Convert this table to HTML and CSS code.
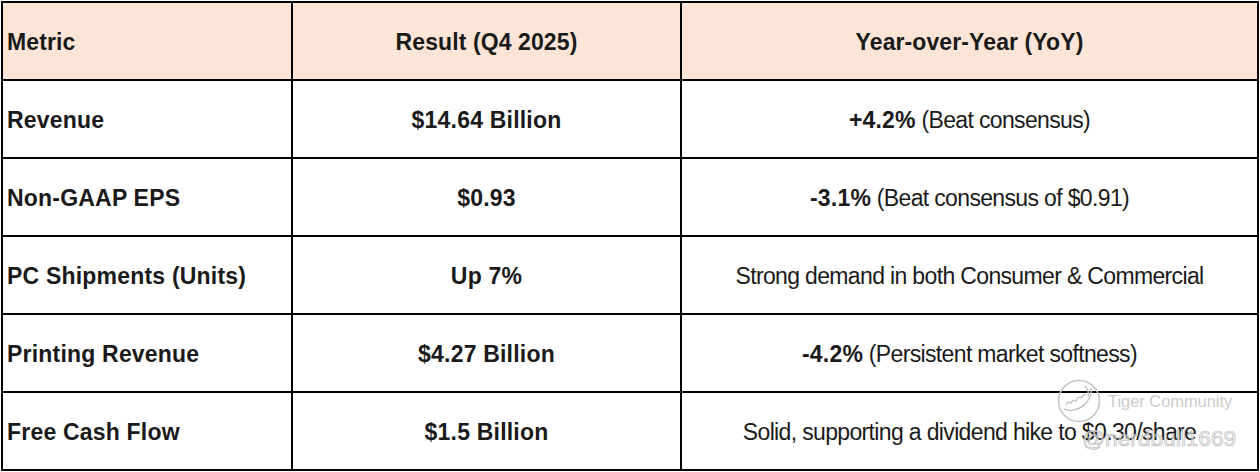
FILE: index.html
```html
<!DOCTYPE html>
<html>
<head>
<meta charset="utf-8">
<link rel="stylesheet" href="styles.css">
</head>
<body>
<div class="page">
  <table class="metrics">
    <colgroup>
      <col class="c1"><col class="c2"><col class="c3">
    </colgroup>
    <thead>
      <tr>
        <th class="left">Metric</th>
        <th>Result (Q4 2025)</th>
        <th>Year-over-Year (YoY)</th>
      </tr>
    </thead>
    <tbody>
      <tr>
        <td class="left b">Revenue</td>
        <td class="b">$14.64 Billion</td>
        <td><b>+4.2%</b> (Beat consensus)</td>
      </tr>
      <tr>
        <td class="left b">Non-GAAP EPS</td>
        <td class="b">$0.93</td>
        <td><b>-3.1%</b> (Beat consensus of $0.91)</td>
      </tr>
      <tr>
        <td class="left b">PC Shipments (Units)</td>
        <td class="b">Up 7%</td>
        <td>Strong demand in both Consumer &amp; Commercial</td>
      </tr>
      <tr>
        <td class="left b">Printing Revenue</td>
        <td class="b">$4.27 Billion</td>
        <td><b>-4.2%</b> (Persistent market softness)</td>
      </tr>
      <tr>
        <td class="left b">Free Cash Flow</td>
        <td class="b">$1.5 Billion</td>
        <td>Solid, supporting a dividend hike to $0.30/share</td>
      </tr>
    </tbody>
  </table>
  <div class="watermark">
    <svg class="wm-logo" width="44" height="44" viewBox="0 0 44 44">
      <circle cx="22" cy="22" r="20.5" fill="none" stroke="#c4c4c4" stroke-width="1.6"/>
      <path d="M7 30 C13 33 22 31 28 25 C33 20 35 14 34 9" fill="none" stroke="#c4c4c4" stroke-width="1.5"/>
      <path d="M9 26 Q11 22 14 24 Q16 20 19 22 Q21 17 24 19 Q26 15 29 16" fill="none" stroke="#c4c4c4" stroke-width="1.4"/>
      <path d="M28 7 C31 10 32 14 31 18" fill="none" stroke="#c4c4c4" stroke-width="1.4"/>
    </svg>
    <span class="wm-name">Tiger Community</span>
    <span class="wm-user">@nerdbull1669</span>
  </div>
</div>
</body>
</html>
```

FILE: styles.css
```css
html, body {
  margin: 0;
  padding: 0;
  background: #ffffff;
}
.page {
  position: relative;
  width: 1260px;
  height: 472px;
  overflow: hidden;
}
.metrics {
  margin: 1px 0 0 1px;
  border-collapse: separate;
  border-spacing: 0;
  table-layout: fixed;
  width: 1258px;
  border-left: 2px solid #000;
  border-top: 2px solid #000;
  font-family: "Liberation Sans", Arial, sans-serif;
  font-size: 23px;
  color: #1a1a1a;
}
.c1 { width: 290px; }
.c2 { width: 389px; }
.c3 { width: 577px; }
.metrics th,
.metrics td {
  height: 76px;
  padding: 2px 4px 0;
  box-sizing: border-box;
  border-right: 2px solid #000;
  border-bottom: 2px solid #000;
  text-align: center;
  vertical-align: middle;
  white-space: nowrap;
  font-weight: normal;
  letter-spacing: -0.65px;
}
.metrics tr { height: 78px; }
.metrics th {
  background: #fce4d6;
  font-weight: bold;
  letter-spacing: 0.1px;
}
.metrics .left {
  text-align: left;
  padding-left: 4px;
}
.metrics .b,
.metrics b {
  font-weight: bold;
  letter-spacing: 0.2px;
}
.watermark {
  position: absolute;
  left: 1057px;
  top: 379px;
  width: 200px;
  height: 90px;
  font-family: "Liberation Sans", Arial, sans-serif;
}
.wm-logo {
  position: absolute;
  left: 0;
  top: 0;
}
.wm-name {
  position: absolute;
  left: 51px;
  top: 13px;
  font-size: 16.4px;
  color: #cbcbcb;
  white-space: nowrap;
}
.wm-user {
  position: absolute;
  left: 25px;
  top: 46px;
  font-size: 22.7px;
  color: rgba(240, 240, 240, 0.6);
  -webkit-text-stroke: 0.7px #b8b8b8;
  white-space: nowrap;
}
```
